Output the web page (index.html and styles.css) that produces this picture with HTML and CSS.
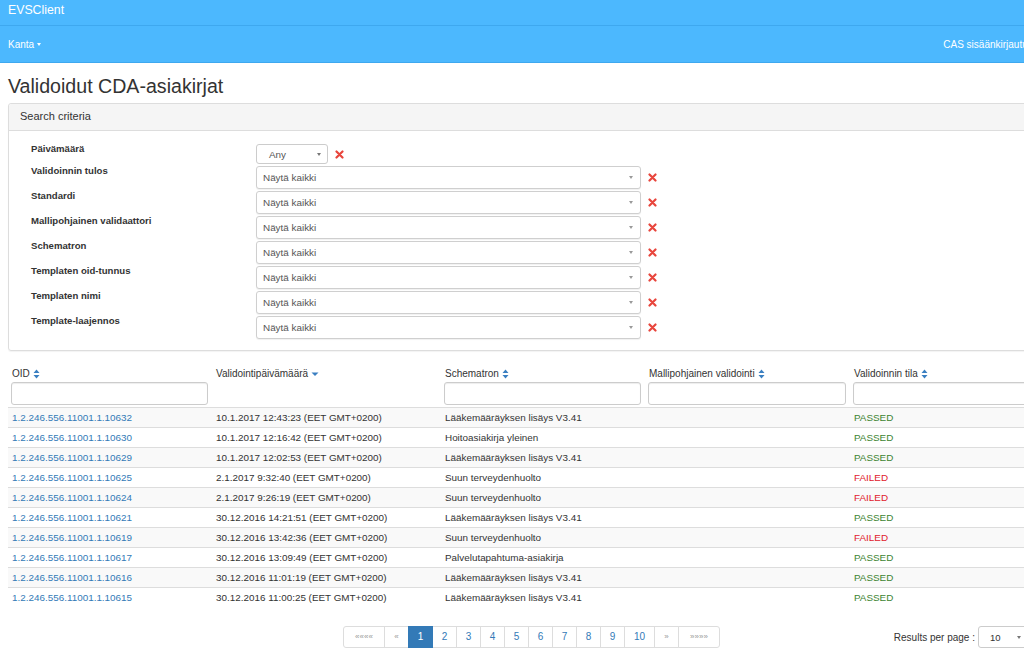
FILE: index.html
```html
<!DOCTYPE html>
<html lang="fi">
<head>
<meta charset="utf-8">
<title>EVSClient</title>
<link rel="stylesheet" href="styles.css">
</head>
<body>
<div class="page">
  <header class="topbar"><span class="brand">EVSClient</span></header>
  <nav class="menubar">
    <span class="menu-item">Kanta <span class="caret"></span></span>
    <span class="menu-item">CAS sisäänkirjautuminen</span>
  </nav>

  <main class="container">
    <h1 class="title">Validoidut CDA-asiakirjat</h1>

    <section class="panel">
      <div class="panel-heading">Search criteria</div>
      <div class="panel-body">
        <div class="crit-row crit-first">
          <span class="crit-label">Päivämäärä</span>
          <div class="crit-ctrl">
            <div class="select select-small"><span>Any</span><span class="arrow"></span></div>
            <svg class="clear" width="9" height="9" viewBox="0 0 9 9"><path d="M1.5 1.5L7.5 7.5M7.5 1.5L1.5 7.5" stroke="#e8453c" stroke-width="2.2" stroke-linecap="round"/></svg>
          </div>
        </div>
        <div class="crit-row">
          <span class="crit-label">Validoinnin tulos</span>
          <div class="crit-ctrl">
            <div class="select select-wide"><span>Näytä kaikki</span><span class="arrow"></span></div>
            <svg class="clear" width="9" height="9" viewBox="0 0 9 9"><path d="M1.5 1.5L7.5 7.5M7.5 1.5L1.5 7.5" stroke="#e8453c" stroke-width="2.2" stroke-linecap="round"/></svg>
          </div>
        </div>
        <div class="crit-row">
          <span class="crit-label">Standardi</span>
          <div class="crit-ctrl">
            <div class="select select-wide"><span>Näytä kaikki</span><span class="arrow"></span></div>
            <svg class="clear" width="9" height="9" viewBox="0 0 9 9"><path d="M1.5 1.5L7.5 7.5M7.5 1.5L1.5 7.5" stroke="#e8453c" stroke-width="2.2" stroke-linecap="round"/></svg>
          </div>
        </div>
        <div class="crit-row">
          <span class="crit-label">Mallipohjainen validaattori</span>
          <div class="crit-ctrl">
            <div class="select select-wide"><span>Näytä kaikki</span><span class="arrow"></span></div>
            <svg class="clear" width="9" height="9" viewBox="0 0 9 9"><path d="M1.5 1.5L7.5 7.5M7.5 1.5L1.5 7.5" stroke="#e8453c" stroke-width="2.2" stroke-linecap="round"/></svg>
          </div>
        </div>
        <div class="crit-row">
          <span class="crit-label">Schematron</span>
          <div class="crit-ctrl">
            <div class="select select-wide"><span>Näytä kaikki</span><span class="arrow"></span></div>
            <svg class="clear" width="9" height="9" viewBox="0 0 9 9"><path d="M1.5 1.5L7.5 7.5M7.5 1.5L1.5 7.5" stroke="#e8453c" stroke-width="2.2" stroke-linecap="round"/></svg>
          </div>
        </div>
        <div class="crit-row">
          <span class="crit-label">Templaten oid-tunnus</span>
          <div class="crit-ctrl">
            <div class="select select-wide"><span>Näytä kaikki</span><span class="arrow"></span></div>
            <svg class="clear" width="9" height="9" viewBox="0 0 9 9"><path d="M1.5 1.5L7.5 7.5M7.5 1.5L1.5 7.5" stroke="#e8453c" stroke-width="2.2" stroke-linecap="round"/></svg>
          </div>
        </div>
        <div class="crit-row">
          <span class="crit-label">Templaten nimi</span>
          <div class="crit-ctrl">
            <div class="select select-wide"><span>Näytä kaikki</span><span class="arrow"></span></div>
            <svg class="clear" width="9" height="9" viewBox="0 0 9 9"><path d="M1.5 1.5L7.5 7.5M7.5 1.5L1.5 7.5" stroke="#e8453c" stroke-width="2.2" stroke-linecap="round"/></svg>
          </div>
        </div>
        <div class="crit-row">
          <span class="crit-label">Template-laajennos</span>
          <div class="crit-ctrl">
            <div class="select select-wide"><span>Näytä kaikki</span><span class="arrow"></span></div>
            <svg class="clear" width="9" height="9" viewBox="0 0 9 9"><path d="M1.5 1.5L7.5 7.5M7.5 1.5L1.5 7.5" stroke="#e8453c" stroke-width="2.2" stroke-linecap="round"/></svg>
          </div>
        </div>
      </div>
    </section>

    <table class="results">
      <colgroup>
        <col class="c1"><col class="c2"><col class="c3"><col class="c4"><col class="c5">
      </colgroup>
      <thead>
        <tr>
          <th><span class="th-text">OID <svg class="sort" width="7" height="10" viewBox="0 0 7 10"><path d="M3.5 0.5L6.5 4H0.5Z M3.5 9.5L6.5 6H0.5Z" fill="#3a7fc1"/></svg></span><div class="filter"></div></th>
          <th><span class="th-text">Validointipäivämäärä <svg class="sort" width="8" height="10" viewBox="0 0 8 10"><path d="M0.5 3.5H7.5L4 7Z" fill="#3a7fc1"/></svg></span></th>
          <th><span class="th-text">Schematron <svg class="sort" width="7" height="10" viewBox="0 0 7 10"><path d="M3.5 0.5L6.5 4H0.5Z M3.5 9.5L6.5 6H0.5Z" fill="#3a7fc1"/></svg></span><div class="filter"></div></th>
          <th><span class="th-text">Mallipohjainen validointi <svg class="sort" width="7" height="10" viewBox="0 0 7 10"><path d="M3.5 0.5L6.5 4H0.5Z M3.5 9.5L6.5 6H0.5Z" fill="#3a7fc1"/></svg></span><div class="filter"></div></th>
          <th><span class="th-text">Validoinnin tila <svg class="sort" width="7" height="10" viewBox="0 0 7 10"><path d="M3.5 0.5L6.5 4H0.5Z M3.5 9.5L6.5 6H0.5Z" fill="#3a7fc1"/></svg></span><div class="filter"></div></th>
        </tr>
      </thead>
      <tbody>
        <tr><td><a href="#">1.2.246.556.11001.1.10632</a></td><td>10.1.2017 12:43:23 (EET GMT+0200)</td><td>Lääkemääräyksen lisäys V3.41</td><td></td><td class="passed">PASSED</td></tr>
        <tr><td><a href="#">1.2.246.556.11001.1.10630</a></td><td>10.1.2017 12:16:42 (EET GMT+0200)</td><td>Hoitoasiakirja yleinen</td><td></td><td class="passed">PASSED</td></tr>
        <tr><td><a href="#">1.2.246.556.11001.1.10629</a></td><td>10.1.2017 12:02:53 (EET GMT+0200)</td><td>Lääkemääräyksen lisäys V3.41</td><td></td><td class="passed">PASSED</td></tr>
        <tr><td><a href="#">1.2.246.556.11001.1.10625</a></td><td>2.1.2017 9:32:40 (EET GMT+0200)</td><td>Suun terveydenhuolto</td><td></td><td class="failed">FAILED</td></tr>
        <tr><td><a href="#">1.2.246.556.11001.1.10624</a></td><td>2.1.2017 9:26:19 (EET GMT+0200)</td><td>Suun terveydenhuolto</td><td></td><td class="failed">FAILED</td></tr>
        <tr><td><a href="#">1.2.246.556.11001.1.10621</a></td><td>30.12.2016 14:21:51 (EET GMT+0200)</td><td>Lääkemääräyksen lisäys V3.41</td><td></td><td class="passed">PASSED</td></tr>
        <tr><td><a href="#">1.2.246.556.11001.1.10619</a></td><td>30.12.2016 13:42:36 (EET GMT+0200)</td><td>Suun terveydenhuolto</td><td></td><td class="failed">FAILED</td></tr>
        <tr><td><a href="#">1.2.246.556.11001.1.10617</a></td><td>30.12.2016 13:09:49 (EET GMT+0200)</td><td>Palvelutapahtuma-asiakirja</td><td></td><td class="passed">PASSED</td></tr>
        <tr><td><a href="#">1.2.246.556.11001.1.10616</a></td><td>30.12.2016 11:01:19 (EET GMT+0200)</td><td>Lääkemääräyksen lisäys V3.41</td><td></td><td class="passed">PASSED</td></tr>
        <tr><td><a href="#">1.2.246.556.11001.1.10615</a></td><td>30.12.2016 11:00:25 (EET GMT+0200)</td><td>Lääkemääräyksen lisäys V3.41</td><td></td><td class="passed">PASSED</td></tr>
      </tbody>
    </table>

    <div class="pager-row">
      <div></div>
      <ul class="pagination">
        <li class="pg pg-muted pg-wide">««««</li>
        <li class="pg pg-muted">«</li>
        <li class="pg pg-active">1</li>
        <li class="pg">2</li>
        <li class="pg">3</li>
        <li class="pg">4</li>
        <li class="pg">5</li>
        <li class="pg">6</li>
        <li class="pg">7</li>
        <li class="pg">8</li>
        <li class="pg">9</li>
        <li class="pg pg-ten">10</li>
        <li class="pg pg-muted">»</li>
        <li class="pg pg-muted pg-wide">»»»»</li>
      </ul>
      <div class="per-page">
        <span>Results per page :</span>
        <div class="select select-per"><span>10</span><span class="arrow"></span></div>
      </div>
    </div>
  </main>
</div>
</body>
</html>
```

FILE: styles.css
```css
html, body {
  margin: 0;
  padding: 0;
  overflow: hidden;
  background: #fff;
}

body {
  font-family: "Liberation Sans", Arial, sans-serif;
  font-size: 9.9px;
  color: #333;
}

.page {
  width: 1063px;
}

.topbar {
  height: 25px;
  background: #4cb8fe;
  border-bottom: 1px solid #3ea8ef;
  box-sizing: content-box;
}

.brand {
  display: block;
  padding-left: 8px;
  line-height: 21px;
  font-size: 12.3px;
  color: #fff;
}

.menubar {
  height: 36px;
  background: #4cb8fe;
  border-bottom: 1px solid #3ea8ef;
  display: flex;
  justify-content: space-between;
  align-items: center;
  padding: 0 8px;
}

.menu-item {
  color: #fff;
  font-size: 10px;
  display: flex;
  align-items: center;
  gap: 3px;
}

.caret {
  width: 0;
  height: 0;
  border-left: 2.5px solid transparent;
  border-right: 2.5px solid transparent;
  border-top: 3px solid #fff;
  margin-top: 1px;
}

.container {
  padding: 0 8px;
}

.title {
  margin: 12px 0 6px;
  font-size: 19.6px;
  font-weight: normal;
  line-height: 22px;
  color: #333;
}

.panel {
  border: 1px solid #ddd;
  border-radius: 3px;
  box-shadow: 0 1px 1px rgba(0, 0, 0, 0.05);
}

.panel-heading {
  background: #f5f5f5;
  border-bottom: 1px solid #ddd;
  height: 26px;
  line-height: 25px;
  padding: 0 11px;
  font-size: 11px;
  color: #333;
  border-radius: 3px 3px 0 0;
}

.panel-body {
  padding: 13px 0 11px 22px;
  display: flex;
  flex-direction: column;
  gap: 2px;
}

.crit-row {
  display: grid;
  grid-template-columns: 225px auto;
  align-items: start;
}

.crit-label {
  font-weight: bold;
  font-size: 9.6px;
  line-height: 10px;
}

.crit-ctrl {
  display: flex;
  align-items: center;
  gap: 7px;
}

.select {
  display: flex;
  align-items: center;
  justify-content: space-between;
  box-sizing: border-box;
  border: 1px solid #ccc;
  border-radius: 3px;
  background: #fff;
  color: #555;
  font-size: 9.9px;
}

.select-small {
  width: 72px;
  height: 20px;
  padding: 0 6px 0 12px;
}

.select-wide {
  width: 385px;
  height: 23px;
  padding: 0 7px 0 6px;
  border-color: #cfcfcf;
  box-shadow: 0 1px 1px rgba(0, 0, 0, 0.06);
}

.select-per {
  width: 50px;
  height: 22px;
  padding: 0 6px 0 11px;
  font-size: 9.5px;
  color: #333;
}

.arrow {
  width: 0;
  height: 0;
  border-left: 2.5px solid transparent;
  border-right: 2.5px solid transparent;
  border-top: 3.5px solid #777;
}

.select-wide .arrow {
  border-top-color: #999;
}

.clear {
  display: block;
}

.results {
  width: 1047px;
  margin-top: 12px;
  border-collapse: collapse;
  table-layout: fixed;
}

.c1 { width: 204px; }
.c2 { width: 229px; }
.c3 { width: 204px; }
.c4 { width: 205px; }
.c5 { width: 205px; }

.results th {
  text-align: left;
  vertical-align: top;
  font-weight: normal;
  font-size: 10px;
  padding: 5px 4px 2px 4px;
  border-bottom: 1px solid #ddd;
  height: 37px;
  box-sizing: content-box;
}

.th-text {
  display: flex;
  align-items: center;
  gap: 3px;
  line-height: 12px;
  height: 12px;
}

.sort {
  display: block;
}

.filter {
  margin: 2px 0 0 -1px;
  height: 23px;
  box-sizing: border-box;
  border: 1px solid #ccc;
  border-radius: 3px;
  box-shadow: inset 0 1px 1px rgba(0, 0, 0, 0.075);
  background: #fff;
}

.results td {
  padding: 4px 4px 4px 4px;
  line-height: 11px;
  border-top: 1px solid #ddd;
  white-space: nowrap;
  height: 11px;
}

.results tbody tr:first-child td {
  border-top: 0;
}

.results tbody tr:nth-child(odd) {
  background: #f9f9f9;
}

.results a {
  color: #337ab7;
  text-decoration: none;
}

.passed {
  color: #3c832f;
}

.failed {
  color: #e0202c;
}

.pager-row {
  width: 1047px;
  margin-top: 19px;
  display: grid;
  grid-template-columns: 1fr auto 1fr;
  align-items: center;
}

.pagination {
  list-style: none;
  margin: 0;
  padding: 0;
  display: flex;
  border-radius: 3px;
}

.pg {
  box-sizing: border-box;
  width: 25px;
  height: 22px;
  line-height: 20px;
  padding: 0;
  text-align: center;
  border: 1px solid #ddd;
  margin-left: -1px;
  color: #337ab7;
  font-size: 10px;
  background: #fff;
}

.pg:first-child {
  margin-left: 0;
  border-radius: 3px 0 0 3px;
}

.pg:last-child {
  border-radius: 0 3px 3px 0;
}

.pg-wide {
  width: 42px;
}

.pg-ten {
  width: 31px;
}

.pg-muted {
  color: #999;
  font-size: 8px;
}

.pg-active {
  background: #337ab7;
  border-color: #337ab7;
  color: #fff;
  position: relative;
  z-index: 1;
}

.per-page {
  display: flex;
  align-items: center;
  justify-content: flex-end;
  gap: 3px;
  padding-right: 27px;
  font-size: 10px;
  color: #333;
}
```
